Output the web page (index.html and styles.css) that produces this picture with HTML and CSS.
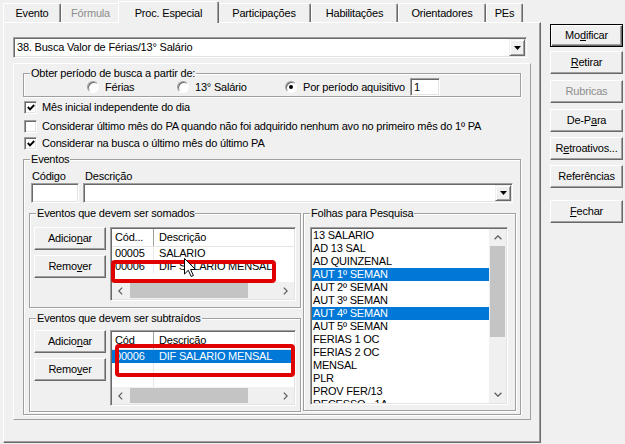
FILE: index.html
```html
<!DOCTYPE html>
<html lang="pt-BR">
<head>
<meta charset="utf-8">
<title>Proc. Especial</title>
<link rel="stylesheet" href="styles.css">
</head>
<body>
<div class="app">
  <div class="main">
    <div class="tabs">
      <div class="tab t1">Evento</div>
      <div class="tab t2 disabled">Fórmula</div>
      <div class="tab t3 active">Proc. Especial</div>
      <div class="tab t4">Participações</div>
      <div class="tab t5">Habilitações</div>
      <div class="tab t6">Orientadores</div>
      <div class="tab t7">PEs</div>
    </div>
    <div class="sheet">
      <div class="field combo proc-combo">
        <span class="combo-text">38. Busca Valor de Férias/13° Salário</span>
        <span class="drop"><svg width="7" height="4" viewBox="0 0 7 4"><path d="M0 0H7L3.5 4Z" fill="#000"/></svg></span>
      </div>
      <div class="panel">
        <div class="group obter">
          <span class="cap">Obter período de busca a partir de:</span>
          <div class="radios">
            <div class="radio r1"><span class="rb"></span><span>Férias</span></div>
            <div class="radio r2"><span class="rb"></span><span>13° Salário</span></div>
            <div class="radio r3"><span class="rb"><i></i></span><span>Por período aquisitivo</span></div>
            <div class="field num">1</div>
          </div>
        </div>

        <div class="chk ck1"><span class="field cb"><svg width="8" height="7" viewBox="0 0 8 7"><polyline points="0.8,3 3,5.3 7.2,1" fill="none" stroke="#000" stroke-width="1.9"/></svg></span><span>Mês inicial independente do dia</span></div>
        <div class="chk ck2"><span class="field cb"></span><span>Considerar último mês do PA quando não foi adquirido nenhum avo no primeiro mês do 1º PA</span></div>
        <div class="chk ck3"><span class="field cb"><svg width="8" height="7" viewBox="0 0 8 7"><polyline points="0.8,3 3,5.3 7.2,1" fill="none" stroke="#000" stroke-width="1.9"/></svg></span><span>Considerar na busca o último mês do último PA</span></div>

        <div class="group eventos">
          <span class="cap">Eventos</span>
          <div class="ev-labels"><span class="lbl-cod">Código</span><span>Descrição</span></div>
          <div class="ev-inputs">
            <div class="field edit-cod"></div>
            <div class="field combo combo-desc">
              <span class="combo-text"></span>
              <span class="drop"><svg width="7" height="4" viewBox="0 0 7 4"><path d="M0 0H7L3.5 4Z" fill="#000"/></svg></span>
            </div>
          </div>
          <div class="ev-body">
            <div class="ev-left">
              <div class="group somados">
                <span class="cap">Eventos que devem ser somados</span>
                <div class="gbody">
                  <div class="btncol">
                    <div class="btn">Adicio<u>n</u>ar</div>
                    <div class="btn">Remo<u>v</u>er</div>
                  </div>
                  <div class="field lv">
                    <div class="lv-head"><span class="c1">Cód...</span><span class="c2">Descrição</span></div>
                    <div class="lv-rows">
                      <div class="lv-row"><span class="c1">00005</span><span class="c2">SALARIO</span></div>
                      <div class="lv-row"><span class="c1">00006</span><span class="c2">DIF SALARIO MENSAL</span></div>
                    </div>
                    <div class="hscroll">
                      <div class="sarr"><svg width="5" height="8" viewBox="0 0 5 8"><path d="M4.2 0.6L0.8 4L4.2 7.4" fill="none" stroke="#606060" stroke-width="1.3"/></svg></div>
                      <div class="hthumb"></div>
                      <div class="sfill"></div>
                      <div class="sarr"><svg width="5" height="8" viewBox="0 0 5 8"><path d="M0.8 0.6L4.2 4L0.8 7.4" fill="none" stroke="#606060" stroke-width="1.3"/></svg></div>
                    </div>
                    <span class="mark mark1"></span>
                    <svg class="cursor" width="12" height="19" viewBox="0 0 12 19"><path d="M0.5 0.5V16L4.3 12.3L7.2 18.5L9.4 17.5L6.6 11.5H11.5Z" fill="#fff" stroke="#000" stroke-width="1"/></svg>
                  </div>
                </div>
              </div>
              <div class="group subtr">
                <span class="cap">Eventos que devem ser subtraídos</span>
                <div class="gbody">
                  <div class="btncol">
                    <div class="btn">Adicio<u>n</u>ar</div>
                    <div class="btn">Remo<u>v</u>er</div>
                  </div>
                  <div class="field lv">
                    <div class="lv-head"><span class="c1">Cód</span><span class="c2">Descrição</span></div>
                    <div class="lv-rows">
                      <div class="lv-row sel"><span class="c1">00006</span><span class="c2">DIF SALARIO MENSAL</span></div>
                      <div class="lv-row"><span class="c1"></span><span class="c2"></span></div>
                      <div class="lv-row"><span class="c1"></span><span class="c2"></span></div>
                    </div>
                    <div class="hscroll">
                      <div class="sarr"><svg width="5" height="8" viewBox="0 0 5 8"><path d="M4.2 0.6L0.8 4L4.2 7.4" fill="none" stroke="#606060" stroke-width="1.3"/></svg></div>
                      <div class="hthumb"></div>
                      <div class="sfill"></div>
                      <div class="sarr"><svg width="5" height="8" viewBox="0 0 5 8"><path d="M0.8 0.6L4.2 4L0.8 7.4" fill="none" stroke="#606060" stroke-width="1.3"/></svg></div>
                    </div>
                    <span class="mark mark2"></span>
                  </div>
                </div>
              </div>
            </div>
            <div class="group folhas">
              <span class="cap">Folhas para Pesquisa</span>
              <div class="fbody">
                <div class="field lb">
                  <div class="lb-items">
                    <div class="lb-item">13 SALARIO</div>
                    <div class="lb-item">AD 13 SAL</div>
                    <div class="lb-item">AD QUINZENAL</div>
                    <div class="lb-item sel">AUT 1º SEMAN</div>
                    <div class="lb-item">AUT 2º SEMAN</div>
                    <div class="lb-item">AUT 3º SEMAN</div>
                    <div class="lb-item sel">AUT 4º SEMAN</div>
                    <div class="lb-item">AUT 5º SEMAN</div>
                    <div class="lb-item">FERIAS 1 OC</div>
                    <div class="lb-item">FERIAS 2 OC</div>
                    <div class="lb-item">MENSAL</div>
                    <div class="lb-item">PLR</div>
                    <div class="lb-item">PROV FER/13</div>
                    <div class="lb-item">RECESSO - 1A</div>
                  </div>
                  <div class="vscroll">
                    <div class="varr"><svg width="8" height="5" viewBox="0 0 8 5"><path d="M0.6 4.2L4 0.8L7.4 4.2" fill="none" stroke="#606060" stroke-width="1.3"/></svg></div>
                    <div class="vthumb"></div>
                    <div class="sfill"></div>
                    <div class="varr"><svg width="8" height="5" viewBox="0 0 8 5"><path d="M0.6 0.8L4 4.2L7.4 0.8" fill="none" stroke="#606060" stroke-width="1.3"/></svg></div>
                  </div>
                </div>
              </div>
            </div>
          </div>
        </div>
      </div>
    </div>
  </div>
  <div class="side">
    <div class="btn default">Mo<u>d</u>ificar</div>
    <div class="btn b-ret"><u>R</u>etirar</div>
    <div class="btn b-rub disabled">Rubricas</div>
    <div class="btn b-dep">De-P<u>a</u>ra</div>
    <div class="btn b-retro">R<u>e</u>troativos...</div>
    <div class="btn b-ref">Referências</div>
    <div class="btn b-fech"><u>F</u>echar</div>
  </div>
</div>
</body>
</html>
```
FILE: styles.css
```css
* { box-sizing: border-box; margin: 0; padding: 0; }
html, body { width: 625px; height: 444px; overflow: hidden; }
body {
  background: #f0f0f0;
  color: #000;
  font-family: "Liberation Sans", Arial, sans-serif;
  font-size: 11px;
  line-height: 13px;
  letter-spacing: -0.2px;
}
u { text-decoration: underline; text-underline-offset: 1px; }
.disabled { color: #8d8d8d; }

.app { display: flex; height: 444px; padding-left: 3px; }
.main { width: 538px; flex: none; }

/* tabs */
.tabs { display: flex; align-items: flex-end; height: 22px; position: relative; z-index: 1; }
.tab {
  flex: none; height: 19px; padding-top: 3px; text-align: center; white-space: nowrap;
  background: #f0f0f0;
  border-top: 1px solid #fff; border-left: 1px solid #fff; border-right: 1px solid #696969;
  box-shadow: inset -1px 0 #a0a0a0;
  border-radius: 2px 2px 0 0;
}
.tab.active { height: 22px; margin: 0 -2px -1px; padding-top: 5px; position: relative; }
.t1 { width: 58px; } .t2 { width: 59px; } .t3 { width: 101px; } .t4 { width: 94px; }
.t5 { width: 87px; } .t6 { width: 88px; } .t7 { width: 37px; }

/* tab sheet */
.sheet {
  height: 421px;
  border: 1px solid; border-color: #fff #696969 #696969 #fff;
  box-shadow: inset -1px -1px #a0a0a0;
}
.panel {
  margin: 5px 0 0 9px; width: 518px; height: 357px;
  border: 1px solid; border-color: #fff #a0a0a0 #a0a0a0 #fff;
}

/* sunken field */
.field {
  background: #fff;
  border: 1px solid; border-color: #a0a0a0 #fff #fff #a0a0a0;
  box-shadow: inset 1px 1px #696969, inset -1px -1px #e3e3e3;
}
.combo { display: flex; align-items: stretch; padding: 1px; }
.combo-text { flex: 1; padding-left: 2px; white-space: nowrap; display: flex; align-items: center; }
.drop {
  width: 16px; flex: none; background: #f0f0f0;
  border: 1px solid; border-color: #f0f0f0 #696969 #696969 #f0f0f0;
  box-shadow: inset 1px 1px #fff, inset -1px -1px #a0a0a0;
  display: flex; align-items: center; justify-content: center;
}
.proc-combo { margin: 14px 0 0 9px; width: 514px; height: 21px; }

/* group boxes */
.group { position: relative; border: 1px solid #a0a0a0; box-shadow: inset 1px 1px #fff, 1px 1px #fff; }
.cap { position: absolute; top: -7px; left: 6px; padding: 0 1px; background: #f0f0f0; white-space: nowrap; }

.obter { margin: 9px 0 0 9px; width: 498px; height: 24px; padding-top: 4px; }
.radios { display: flex; align-items: center; height: 18px; padding-left: 63px; }
.radio { display: flex; align-items: center; flex: none; white-space: nowrap; }
.r1 { width: 90px; } .r2 { width: 108px; }
.rb {
  width: 12px; height: 12px; flex: none; margin-right: 6px; border-radius: 50%;
  background: #fff; border: 1px solid; border-color: #a0a0a0 #fff #fff #a0a0a0;
  box-shadow: inset 1px 1px #696969;
  display: flex; align-items: center; justify-content: center;
}
.rb i { width: 4px; height: 4px; border-radius: 50%; background: #000; }
.num { width: 30px; height: 18px; margin-left: 5px; padding: 2px 3px; }

/* checkboxes */
.chk { display: flex; align-items: center; height: 13px; margin-left: 10px; white-space: nowrap; }
.ck1 { margin-top: 4px; } .ck2 { margin-top: 6px; } .ck3 { margin-top: 4px; }
.cb { width: 13px; height: 13px; flex: none; margin-right: 5px; display: flex; align-items: center; justify-content: center; }

/* eventos */
.eventos { margin: 9px 0 0 9px; width: 498px; height: 256px; }
.ev-labels { display: flex; margin-top: 10px; height: 13px; }
.lbl-cod { width: 53px; margin-left: 8px; }
.ev-inputs { display: flex; height: 20px; }
.edit-cod { width: 48px; height: 20px; margin-left: 7px; }
.combo-desc { width: 430px; height: 20px; margin-left: 4px; }
.ev-body { display: flex; align-items: flex-start; margin-top: 10px; }
.ev-left { width: 272px; margin-left: 5px; flex: none; }
.somados { height: 95px; }
.subtr { height: 94px; margin-top: 10px; }
.folhas { width: 213px; height: 198px; margin-left: 2px; flex: none; }
.gbody { display: flex; align-items: flex-start; padding: 13px 0 0 4px; gap: 4px; }
.subtr .gbody { padding-top: 11px; }
.fbody { padding: 13px 0 0 6px; }

/* buttons */
.btncol { width: 72px; flex: none; display: flex; flex-direction: column; gap: 5px; }
.btn {
  height: 23px; display: flex; align-items: center; justify-content: center; white-space: nowrap;
  background: #f0f0f0;
  border: 1px solid; border-color: #fff #696969 #696969 #fff;
  box-shadow: inset -1px -1px #a0a0a0;
}
.btn.default {
  border-color: #000;
  box-shadow: inset 1px 1px #fff, inset -1px -1px #696969, inset -2px -2px #a0a0a0;
}

/* list views */
.lv { position: relative; width: 186px; flex: none; display: flex; flex-direction: column; padding: 1px; }
.somados .lv { height: 74px; }
.subtr .lv { height: 76px; }
.lv-head { display: flex; height: 18px; flex: none; background: #fff; border-bottom: 1px solid #e5e5e5; }
.lv-head span { display: flex; align-items: center; }
.lv .c1 { width: 42px; flex: none; padding-left: 3px; border-right: 1px solid #e8e8e8; white-space: nowrap; }
.lv-head .c1 { border-right-color: #a0a0a0; }
.lv .c2 { flex: 1; padding-left: 5px; white-space: nowrap; }
.lv-rows { flex: 1; overflow: hidden; }
.lv-row { display: flex; height: 13px; }
.lv-row.sel { background: #0078d7; color: #fff; }
.lv-row.sel .c1 { border-right-color: #0078d7; }

.hscroll { height: 17px; flex: none; display: flex; align-items: center; background: #f0f0f0; }
.sarr { width: 17px; height: 17px; flex: none; display: flex; align-items: center; justify-content: center; }
.hthumb { display: block; width: 118px; height: 15px; margin-left: 1px; background: #c4c4c4; flex: none; }
.sfill { flex: 1 1 auto; }

/* list box */
.lb { width: 198px; height: 178px; display: flex; padding: 1px; }
.lb-items { flex: 1; overflow: hidden; background: #fff; padding-left: 1px; }
.lb-item { height: 13px; white-space: nowrap; }
.lb-item.sel { background: #0078d7; color: #fff; margin-left: -1px; padding-left: 1px; }
.vscroll { width: 17px; flex: none; display: flex; flex-direction: column; align-items: center; background: #f0f0f0; }
.varr { width: 17px; height: 17px; flex: none; display: flex; align-items: center; justify-content: center; }
.vthumb { display: block; width: 15px; height: 91px; flex: none; background: #c4c4c4; }

/* annotations */
.mark { position: absolute; border: 4px solid #e00000; border-radius: 4px; }
.mark1 { left: 0; top: 32px; width: 165px; height: 23px; }
.mark2 { left: 4px; top: 13px; width: 180px; height: 33px; }
.cursor { position: absolute; left: 73px; top: 30px; }

/* side buttons */
.side { width: 73px; margin-left: 9px; padding-top: 24px; flex: none; display: flex; flex-direction: column; }
.b-ret { margin-top: 4px; }
.b-rub { margin-top: 6px; }
.b-dep { margin-top: 6px; }
.b-retro { margin-top: 5px; }
.b-ref { margin-top: 5px; }
.b-fech { margin-top: 12px; }
```
